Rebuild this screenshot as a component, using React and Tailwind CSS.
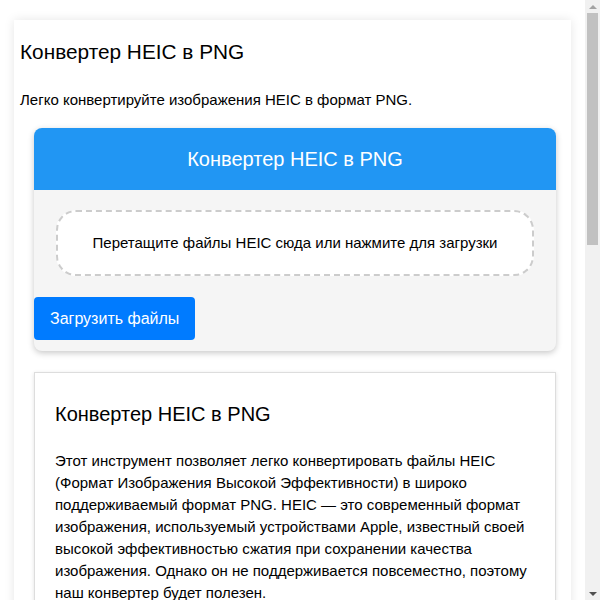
import React from 'react';

const steps = [
  'Нажмите кнопку «Загрузить файлы» или перетащите изображения HEIC в область загрузки.',
  'Дождитесь окончания конвертации — она выполняется прямо в вашем браузере.',
  'Скачайте готовые файлы PNG на свой компьютер или телефон.',
];

const benefits = [
  'Бесплатно и без регистрации',
  'Файлы не покидают ваше устройство',
  'Пакетная конвертация нескольких изображений',
  'Сохранение исходного качества без потерь',
];

// the reference was shot with a classic scrollbar, so draw one
const ScrollBar = () => (
  <div className="fixed right-0 top-0 flex h-screen w-[15px] flex-col items-center bg-[#f1f1f1]">
    <div className="flex h-[13px] items-center justify-center">
      <div className="h-0 w-0 border-x-[4px] border-b-[4px] border-x-transparent border-b-[#a3a3a3]" />
    </div>
    <div className="h-[232px] w-[11px] bg-[#c1c1c1]" />
    <div className="flex-1" />
    <div className="flex h-[13px] items-center justify-center">
      <div className="h-0 w-0 border-x-[4px] border-t-[4px] border-x-transparent border-t-[#505050]" />
    </div>
  </div>
);

const ConverterCard = () => (
  <div className="ml-[20px] mr-[15px] overflow-hidden rounded-lg bg-[#f5f5f5] shadow-[0_2px_6px_rgba(0,0,0,0.22)]">
    <div className="flex h-[62px] items-center justify-center bg-[#2196f3] text-[20px] text-white">
      Конвертер HEIC в PNG
    </div>
    <div className="mx-[22px] mt-[20px] flex h-[66px] items-center justify-center rounded-[20px] border-2 border-dashed border-[#cccccc] bg-white text-[15px] text-black">
      Перетащите файлы HEIC сюда или нажмите для загрузки
    </div>
    <div className="pb-[11px] pt-[21px]">
      <button className="h-[43px] rounded-[4px] bg-[#007bff] px-[16px] text-[16px] text-white">
        Загрузить файлы
      </button>
    </div>
  </div>
);

const InfoCard = () => (
  <div className="ml-[20px] mr-[15px] mt-[21px] border border-[#dddddd] bg-white p-[20px] shadow-[0_1px_4px_rgba(0,0,0,0.12)]">
    <h2 className="mb-[24px] mt-[10px] text-[20px] leading-[23px]">Конвертер HEIC в PNG</h2>
    <p className="text-[15px] leading-[22px]">
      Этот инструмент позволяет легко конвертировать файлы HEIC (Формат Изображения Высокой Эффективности) в широко
      поддерживаемый формат PNG. HEIC — это современный формат изображения, используемый устройствами Apple, известный
      своей высокой эффективностью сжатия при сохранении качества изображения. Однако он не поддерживается повсеместно,
      поэтому наш конвертер будет полезен.
    </p>
    <h2 className="mb-[20px] mt-[30px] text-[20px] leading-[23px]">Как использовать</h2>
    <ol className="list-decimal pl-[40px] text-[15px] leading-[22px]">
      {steps.map((s) => (
        <li key={s} className="mb-[6px]">{s}</li>
      ))}
    </ol>
    <h2 className="mb-[20px] mt-[30px] text-[20px] leading-[23px]">Преимущества</h2>
    <ul className="list-disc pl-[40px] text-[15px] leading-[22px]">
      {benefits.map((b) => (
        <li key={b} className="mb-[6px]">{b}</li>
      ))}
    </ul>
    <h2 className="mb-[20px] mt-[30px] text-[20px] leading-[23px]">Почему PNG?</h2>
    <p className="text-[15px] leading-[22px]">
      PNG — это формат без потерь, который поддерживается практически всеми программами, браузерами и операционными
      системами. Он отлично подходит для редактирования, публикации в интернете и долговременного хранения изображений
      с сохранением прозрачности.
    </p>
  </div>
);

export default function App() {
  return (
    <div className="min-h-screen bg-white text-black [font-family:'Liberation_Sans',Arial,sans-serif]">
      <div className="mr-[15px] pb-[20px] pt-[20px]">
        <div className="mx-[14px] bg-white px-[6px] pb-[20px] pt-[1px] shadow-[0_0_10px_rgba(0,0,0,0.1)]">
          <h1 className="mb-[28px] mt-[19px] text-[20.8px] leading-[23px]">Конвертер HEIC в PNG</h1>
          <p className="mb-[19px] text-[15px] leading-[18px]">Легко конвертируйте изображения HEIC в формат PNG.</p>
          <div className="-mx-[6px]">
            <ConverterCard />
            <InfoCard />
          </div>
        </div>
      </div>
      <ScrollBar />
    </div>
  );
}
